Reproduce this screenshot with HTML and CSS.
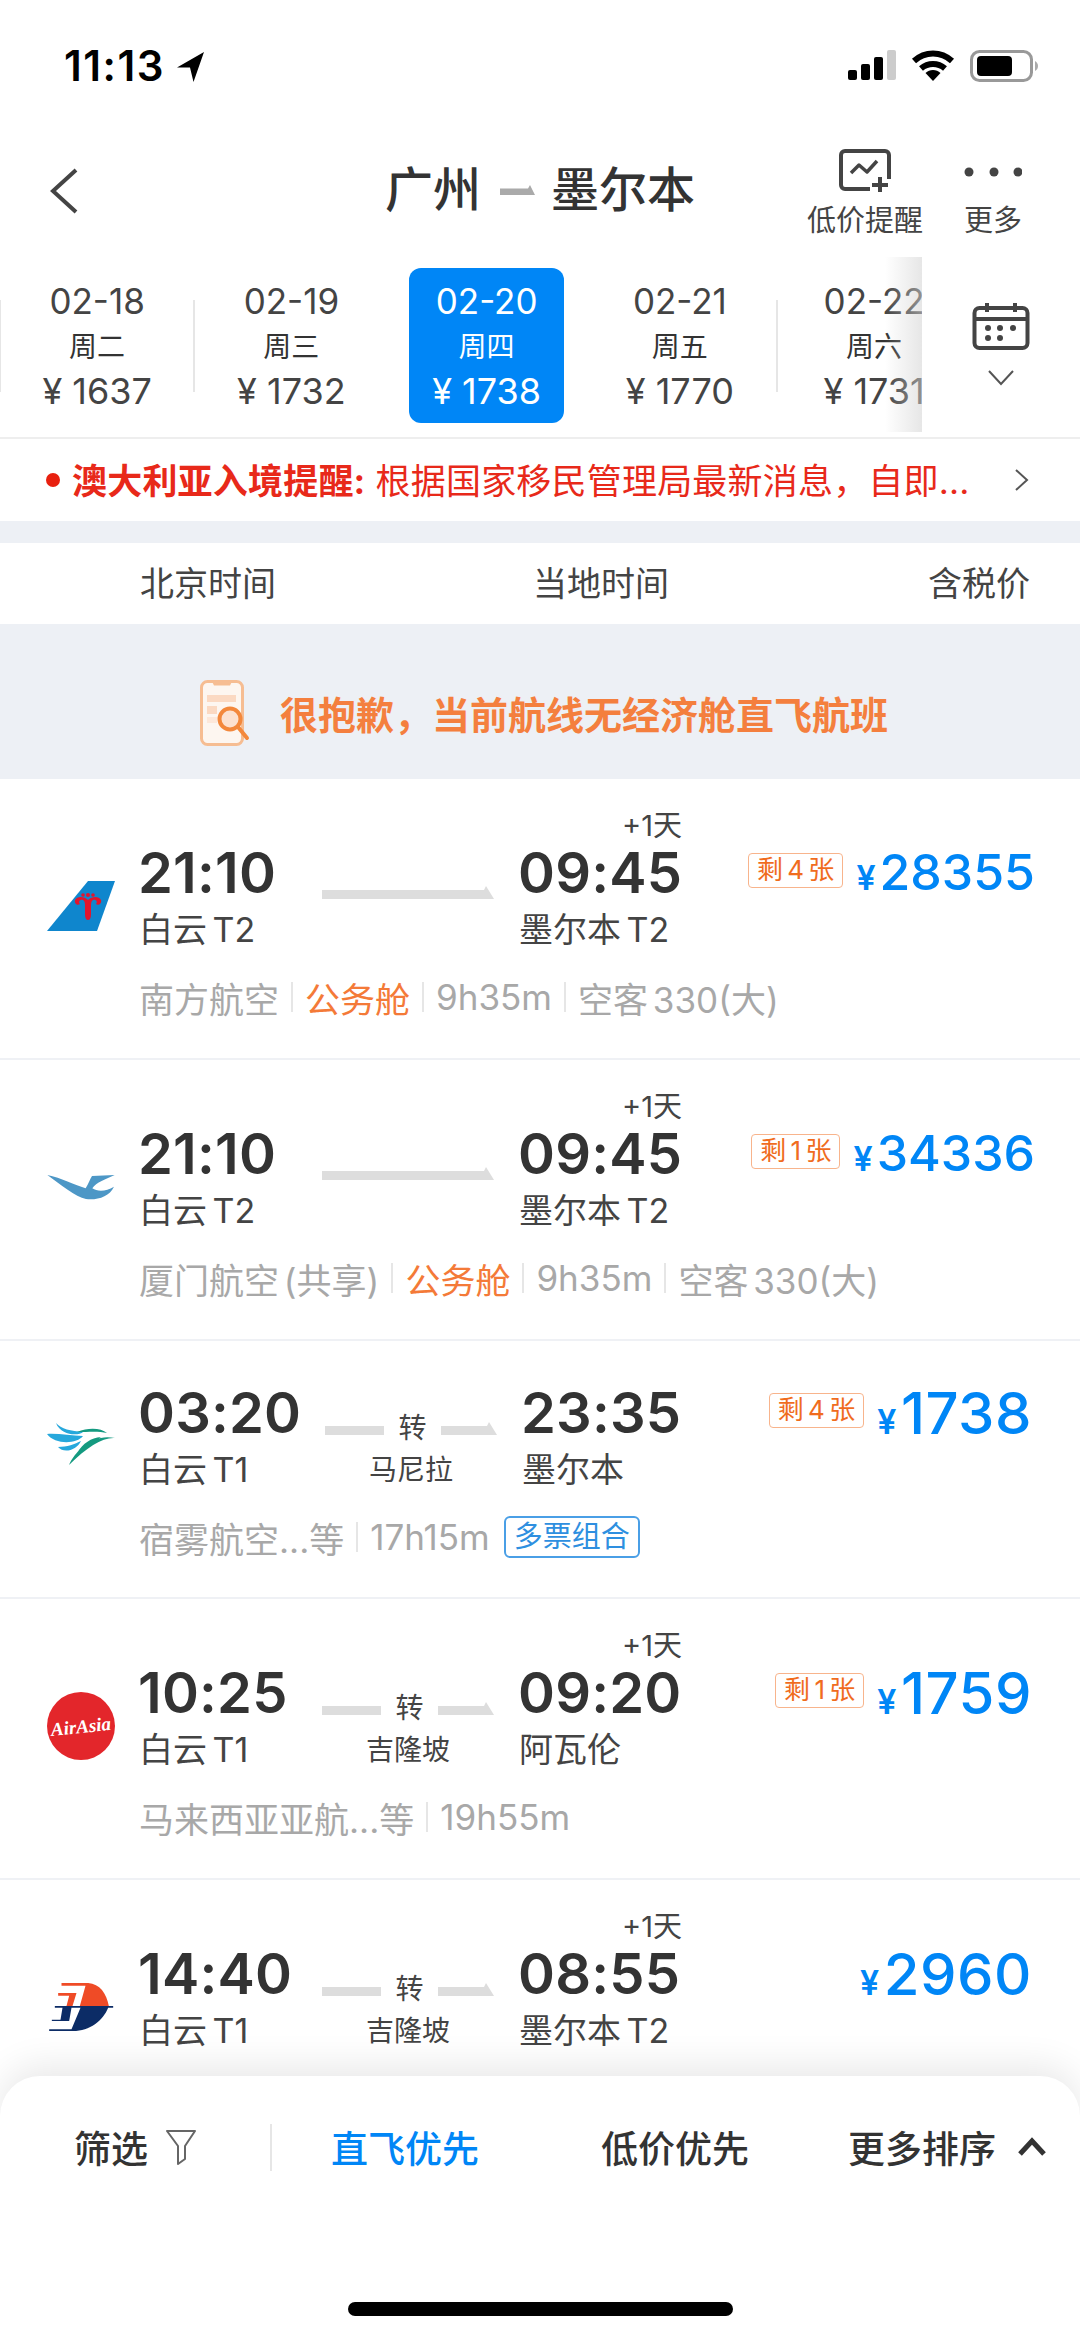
FILE: index.html
```html
<!DOCTYPE html>
<html lang="zh-CN">
<head>
<meta charset="utf-8">
<title>广州 - 墨尔本</title>
<link rel="stylesheet" href="styles.css">
</head>
<body>
<div class="page">
  <header class="status">
    <div class="status-time">11:13
      <svg class="loc" viewBox="0 0 27 30"><path d="M27 0 0 15.500h13L16.500 30Z"/></svg>
    </div>
    <div class="status-icons">
      <svg class="signal" viewBox="0 0 48 30"><rect x="0" y="20" width="9" height="10" rx="2"/><rect x="13" y="14" width="9" height="16" rx="2"/><rect x="26" y="7" width="9" height="23" rx="2"/><rect class="off" x="39" y="0" width="9" height="30" rx="2"/></svg>
      <svg class="wifi" viewBox="0 0 44 31"><path d="M3 11C14 1 30 1 41 11" /><path d="M10 18.500c7-6 17-6 24 0"/><path class="wedge" d="M22 31 14.500 23c4-4 11-4 15 0Z"/></svg>
      <svg class="battery" viewBox="0 0 68 32"><rect class="shell" x="1.500" y="1.500" width="60" height="29" rx="8"/><rect x="7" y="6" width="35" height="20" rx="4"/><path class="nub" d="M65 11c2 1 3 3 3 5s-1 4-3 5Z"/></svg>
    </div>
  </header>

  <nav class="nav">
    <div class="nav-left"><svg class="back" viewBox="0 0 28 46"><path d="M26 2 3 23l23 21"/></svg></div>
    <h1 class="title">广州<svg class="title-link" viewBox="0 0 35 10"><path d="M0 3.500h28L30 0l5 10H0Z"/></svg>墨尔本</h1>
    <div class="nav-actions">
      <div class="action">
        <svg class="action-icon alert" viewBox="0 0 52 44"><path class="frame" d="M31 40H6a4 4 0 0 1-4-4V6a4 4 0 0 1 4-4h40a4 4 0 0 1 4 4v24"/><path class="frame thin" d="m12 24 8-8 8 7 10-11"/><path class="frame" d="M33 36h16M41 28v15"/></svg>
        <span class="action-label">低价提醒</span>
      </div>
      <div class="action">
        <svg class="action-icon dots" viewBox="0 0 58 44"><circle cx="5" cy="23" r="4.500"/><circle cx="30" cy="23" r="4.500"/><circle cx="54" cy="23" r="4.500"/></svg>
        <span class="action-label">更多</span>
      </div>
    </div>
  </nav>

  <section class="strip">
    <div class="dates">
      <div class="tab sep"><b class="t-date">02-18</b><b class="t-week">周二</b><b class="t-price">¥ 1637</b></div>
      <div class="tab sep"><b class="t-date">02-19</b><b class="t-week">周三</b><b class="t-price">¥ 1732</b></div>
      <div class="tab tab-on"><div class="pill"><b class="t-date">02-20</b><b class="t-week">周四</b><b class="t-price">¥ 1738</b></div></div>
      <div class="tab"><b class="t-date">02-21</b><b class="t-week">周五</b><b class="t-price">¥ 1770</b></div>
      <div class="tab sep tab-last"><b class="t-date">02-22</b><b class="t-week">周六</b><b class="t-price">¥ 1731</b></div>
    </div>
    <div class="fade"></div>
    <div class="cal">
      <svg class="cal-icon" viewBox="0 0 58 48"><rect class="cal-line" x="2.500" y="6" width="53" height="40" rx="5"/><path class="cal-line" d="M2.500 17h53M15 1v9M43 1v9"/><g class="cal-dots"><circle cx="16" cy="26" r="3"/><circle cx="28" cy="26" r="3"/><circle cx="41" cy="26" r="3"/><circle cx="16" cy="36" r="3"/><circle cx="28" cy="36" r="3"/></g></svg>
      <svg class="cal-chev" viewBox="0 0 26 16"><path d="m1 1 12 13L25 1"/></svg>
    </div>
  </section>

  <section class="notice">
    <i class="notice-dot"></i>
    <p class="notice-text"><strong>澳大利亚入境提醒:</strong> 根据国家移民管理局最新消息<span class="tc">，</span>自即...</p>
    <svg class="notice-chev" viewBox="0 0 15 22"><path d="m2 1 11 10L2 21"/></svg>
  </section>

  <div class="band"></div>

  <section class="cols">
    <span class="col-a">北京时间</span>
    <span class="col-b">当地时间</span>
    <span class="col-c">含税价</span>
  </section>

  <section class="sorry">
    <svg class="sorry-icon" viewBox="0 0 56 68">
      <rect class="ph" x="1.500" y="1.500" width="41" height="63" rx="6"/>
      <path class="ph-bar" d="M12 1.500h20l-2 4H14Z"/>
      <rect class="blk" x="7" y="15" width="29" height="7"/>
      <rect class="blk" x="7" y="26" width="10" height="8"/>
      <rect class="blk2" x="7" y="37" width="10" height="6"/>
      <circle class="lens-fill" cx="30" cy="39" r="10.500"/>
      <path class="lens" d="m38 47 9 11"/>
    </svg>
    <span class="sorry-text">很抱歉<span class="tc">，</span>当前航线无经济舱直飞航班</span>
  </section>

  <article class="row">
    <div class="logo">
      <svg class="lg-tail" viewBox="0 0 68 50"><path fill="#0f86cd" d="M0 50 41 0h27L50 50Z"/><path fill="#e3142c" d="M41 19C37 15 30 15 28 19 27 23 31 25 33 23 31 21 33 18 36 19 38 20 38 23 38 26V33C38 37 39 39 41 39 43 39 44 37 44 33V26C44 23 44 20 46 19 49 18 51 21 49 23 51 25 55 23 54 19 52 15 45 15 41 19Z"/><circle fill="#e3142c" cx="41" cy="14" r="2"/><circle fill="#e3142c" cx="36" cy="14" r="1.800"/><circle fill="#e3142c" cx="46" cy="14" r="1.800"/></svg>
    </div>
    <div class="plus">+1天</div>
    <div class="dep time">21:10</div>
    <div class="dep-sub sub">白云 T2</div>
    <div class="route"><svg class="line-long" viewBox="0 0 172 13"><path d="M0 4h162l2-4 8 13H0Z"/></svg></div>
    <div class="arr time">09:45</div>
    <div class="arr-sub sub">墨尔本 T2</div>
    <div class="price-box"><span class="left">剩 4 张</span><span class="price price-s"><i>¥</i>28355</span></div>
    <div class="meta"><span>南方航空</span><u></u><span class="cabin">公务舱</span><u></u><span>9h35m</span><u></u><span>空客 330(大)</span></div>
  </article>

  <article class="row">
    <div class="logo">
      <svg class="lg-xm" viewBox="0 0 202 75"><path fill="#4d97c6" d="M0 0C40 8 88 32 115 40 124 25 128 12 134 3L202 0C176 12 146 22 135 40 150 50 176 50 200 35 186 65 150 76 116 72 84 66 40 28 0 0Z"/></svg>
    </div>
    <div class="plus">+1天</div>
    <div class="dep time">21:10</div>
    <div class="dep-sub sub">白云 T2</div>
    <div class="route"><svg class="line-long" viewBox="0 0 172 13"><path d="M0 4h162l2-4 8 13H0Z"/></svg></div>
    <div class="arr time">09:45</div>
    <div class="arr-sub sub">墨尔本 T2</div>
    <div class="price-box"><span class="left">剩 1 张</span><span class="price price-s"><i>¥</i>34336</span></div>
    <div class="meta"><span>厦门航空 (共享)</span><u></u><span class="cabin">公务舱</span><u></u><span>9h35m</span><u></u><span>空客 330(大)</span></div>
  </article>

  <article class="row row-short">
    <div class="logo">
      <svg class="lg-cebu" viewBox="0 0 68 42">
        <path fill="#27a8dc" d="M9 0C14 6 24 8 36 9 32 13 14 13 9 0ZM0 11C10 10 24 13 36 13 30 21 8 22 0 11ZM11 24C20 24 28 21 34 18 30 27 17 31 11 24Z"/>
        <path fill="#149a80" d="M30 9C42 4 54 5 60 10 52 8 42 9 30 9ZM22 42C28 28 46 10 68 15 56 14 40 24 22 42ZM30 30C36 20 44 15 54 14 46 19 38 25 30 30Z"/>
      </svg>
    </div>
    <div class="dep time">03:20</div>
    <div class="dep-sub sub">白云 T1</div>
    <div class="route route-via"><i class="seg"></i><span class="via">转</span><svg class="seg-end" viewBox="0 0 56 13"><path d="M0 4h46l2-4 8 13H0Z"/></svg></div>
    <div class="via-name">马尼拉</div>
    <div class="arr time">23:35</div>
    <div class="arr-sub sub">墨尔本</div>
    <div class="price-box"><span class="left">剩 4 张</span><span class="price"><i>¥</i>1738</span></div>
    <div class="meta"><span>宿雾航空...等</span><u></u><span>17h15m</span><span class="combo">多票组合</span></div>
  </article>

  <article class="row">
    <div class="logo">
      <svg class="lg-aa" viewBox="0 0 68 68"><ellipse fill="#e3262b" cx="34" cy="34" rx="34" ry="34"/><text class="aa-text" x="34" y="41" text-anchor="middle" transform="rotate(-6 34 36)">AirAsia</text></svg>
    </div>
    <div class="plus">+1天</div>
    <div class="dep time">10:25</div>
    <div class="dep-sub sub">白云 T1</div>
    <div class="route route-via"><i class="seg"></i><span class="via">转</span><svg class="seg-end" viewBox="0 0 56 13"><path d="M0 4h46l2-4 8 13H0Z"/></svg></div>
    <div class="via-name">吉隆坡</div>
    <div class="arr time">09:20</div>
    <div class="arr-sub sub">阿瓦伦</div>
    <div class="price-box"><span class="left">剩 1 张</span><span class="price"><i>¥</i>1759</span></div>
    <div class="meta"><span>马来西亚亚航...等</span><u></u><span>19h55m</span></div>
  </article>

  <article class="row">
    <div class="logo">
      <svg class="lg-mh" viewBox="25 25 200 150">
        <path fill="#ef4b26" d="M65 28H145C180 30 200 60 207 97H120L137 36H65ZM55 58H110L98 97H80L88 66H55Z"/>
        <path fill="#0c2c66" d="M45 97H220V102H45ZM122 102H205C190 140 150 172 100 172H28V167H95ZM68 102H95L88 142H36V138H62Z"/>
      </svg>
    </div>
    <div class="plus">+1天</div>
    <div class="dep time">14:40</div>
    <div class="dep-sub sub">白云 T1</div>
    <div class="route route-via"><i class="seg"></i><span class="via">转</span><svg class="seg-end" viewBox="0 0 56 13"><path d="M0 4h46l2-4 8 13H0Z"/></svg></div>
    <div class="via-name">吉隆坡</div>
    <div class="arr time">08:55</div>
    <div class="arr-sub sub">墨尔本 T2</div>
    <div class="price-box"><span class="price"><i>¥</i>2960</span></div>
  </article>

  <footer class="sheet">
    <div class="bar">
      <span class="filter">筛选</span>
      <svg class="funnel" viewBox="0 0 32 36"><path d="M2 2h28L20 17v13l-7 5V17Z"/></svg>
      <i class="bar-div"></i>
      <span class="sort sort-on">直飞优先</span>
      <span class="sort sort-low">低价优先</span>
      <span class="sort sort-more">更多排序</span>
      <svg class="up" viewBox="0 0 30 20"><path d="M3 17 15 4l12 13"/></svg>
    </div>
    <div class="home"></div>
  </footer>
</div>
</body>
</html>
```

FILE: styles.css
```css
* { box-sizing: border-box; }
html, body { margin: 0; padding: 0; background: #fff; }
body { font-family: Inter, "Noto Sans CJK SC", sans-serif; color: #333; }
.page { position: relative; width: 1080px; height: 2339px; overflow: hidden; background: #fff; }
.tc { font-family: "Noto Sans CJK TC", sans-serif; }

/* status bar */
.status { height: 120px; display: flex; justify-content: space-between; padding: 47px 42px 0 64px; }
.status-time { display: flex; align-items: flex-start; gap: 12px; font-size: 42px; font-weight: 600; letter-spacing: 1.500px; line-height: 38px; color: #000; }
.loc { width: 27px; height: 30px; margin-top: 5px; fill: #000; }
.status-icons { display: flex; align-items: flex-start; gap: 15px; padding-top: 3px; }
.signal { width: 48px; height: 30px; fill: #000; }
.signal .off { fill: #ccc; }
.wifi { width: 44px; height: 31px; fill: none; stroke: #000; stroke-width: 6; }
.wifi .wedge { fill: #000; stroke: none; }
.battery { width: 68px; height: 32px; fill: #000; }
.battery .shell { fill: none; stroke: #999; stroke-width: 3; }
.battery .nub { fill: #aaa; }

/* nav */
.nav { height: 148px; display: grid; grid-template-columns: 1fr auto 1fr; }
.nav-left { padding: 48px 0 0 50px; }
.back { width: 28px; height: 46px; fill: none; stroke: #444; stroke-width: 4; display: block; }
.title { margin: 40px 0 0; font-size: 48px; font-weight: 500; line-height: 60px; color: #333; display: flex; align-items: center; height: 60px; }
.title-link { width: 35px; height: 10px; margin: 0 16px 0 19px; fill: #aaa; }
.nav-actions { display: flex; justify-content: flex-end; gap: 41px; padding: 29px 58px 0 0; }
.action { display: flex; flex-direction: column; align-items: center; }
.action-icon { height: 44px; display: block; }
.alert { width: 52px; }
.dots { width: 58px; fill: #444; }
.frame { fill: none; stroke: #444; stroke-width: 4; stroke-linejoin: round; }
.frame.thin { stroke-width: 3.500; }
.action-label { font-size: 29px; line-height: 40px; margin-top: 8px; color: #444; }

/* date strip */
.strip { position: relative; height: 171px; display: flex; border-bottom: 2px solid #eeeeee; }
.dates { width: 922px; height: 169px; display: flex; overflow: hidden; }
.tab { position: relative; flex: 0 0 194.250px; height: 155px; padding-top: 10px; display: flex; flex-direction: column; align-items: center; white-space: nowrap; }
.tab b { font-weight: 400; display: block; }
.t-date { font-size: 35px; line-height: 46px; color: #444; }
.t-week { font-size: 28px; line-height: 46px; color: #333; }
.t-price { font-size: 36px; line-height: 42px; color: #444; }
.tab.sep::before { content: ""; position: absolute; left: -1px; top: 32px; height: 92px; width: 2px; background: #e6e6e6; }
.tab-on { padding-top: 0; }
.pill { width: 155px; height: 155px; margin-left: 2px; padding-top: 10px; border-radius: 12px; background: #0086f6; display: flex; flex-direction: column; align-items: center; }
.pill b { color: #fff; }
.fade { position: absolute; left: 885px; top: -11px; bottom: 5px; width: 37px; background: linear-gradient(90deg, rgba(210,210,210,0), rgba(210,210,210,.55)); }
.cal { flex: 1; display: flex; flex-direction: column; align-items: center; padding-top: 34px; }
.cal-icon { width: 58px; height: 48px; display: block; }
.cal-line { fill: none; stroke: #444; stroke-width: 4; }
.cal-dots { fill: #444; }
.cal-chev { width: 26px; height: 16px; margin-top: 20px; fill: none; stroke: #555; stroke-width: 2; display: block; }

/* notice */
.notice { height: 82px; display: flex; align-items: center; padding-left: 46px; }
.notice-dot { width: 14px; height: 14px; border-radius: 50%; background: #e8200f; flex: none; }
.notice-text { margin: 0 0 0 12px; width: 921px; font-size: 35px; letter-spacing: .200px; line-height: 50px; color: #e8291a; white-space: nowrap; }
.notice-text strong { font-weight: 700; }
.notice-chev { width: 15px; height: 22px; margin-left: 21px; fill: none; stroke: #555; stroke-width: 2; }

.band { height: 22px; background: #edf0f5; }

/* column header */
.cols { height: 81px; display: flex; align-items: center; font-size: 34px; color: #444; padding: 0 50px 5px 140px; }
.col-b { margin-left: 257px; }
.col-c { margin-left: auto; }

/* no-direct banner */
.sorry { height: 155px; padding: 25px 0 0 200px; background: #edf0f5; display: flex; align-items: center; }
.sorry-icon { width: 56px; height: 68px; flex: none; }
.ph { fill: #fdf6f0; stroke: #f6bd92; stroke-width: 3; }
.ph-bar { fill: #f6bd92; }
.blk { fill: #fbd9c2; }
.blk2 { fill: #fde8da; }
.lens { fill: none; stroke: #f3883c; stroke-width: 4; stroke-linecap: round; }
.lens-fill { fill: rgba(251,217,194,.7); stroke: #f3883c; stroke-width: 4; }
.sorry-text { margin-left: 24px; font-size: 38px; font-weight: 700; line-height: 50px; color: #f47f3e; }

/* flight rows */
.row { display: grid; height: 281px; padding: 30px 48px 0 46px; border-bottom: 2px solid #eff1f5;
  grid-template-columns: 94px 182px 198px 162px 1fr;
  grid-template-rows: 34px 60px 54px 78px;
  grid-template-areas:
    ". . . plus ."
    "logo dep route arr price"
    "logo depsub via arrsub ."
    ". meta meta meta meta"; }
.row-short { height: 258px; padding-top: 42px; grid-template-columns: 94px 185px 198px 162px 1fr;
  grid-template-rows: 60px 54px 79px;
  grid-template-areas:
    "logo dep route arr price"
    "logo depsub via arrsub ."
    ". meta meta meta meta"; }
.logo { grid-area: logo; align-self: center; width: 70px; margin-top: 12px; display: flex; justify-content: center; }
.logo svg { display: block; }
.row-short .logo { margin-top: 8px; }
.lg-tail { width: 68px; height: 50px; }
.lg-xm { width: 68px; height: 25px; }
.lg-cebu { width: 68px; height: 42px; }
.lg-aa { width: 68px; height: 68px; }
.lg-mh { width: 67px; height: 50px; }
.aa-text { font-family: "Liberation Serif", serif; font-style: italic; font-weight: 700; font-size: 19px; fill: #fff; }
.plus { grid-area: plus; text-align: right; font-size: 29px; line-height: 30px; padding-top: 2px; color: #444; }
.time { margin-left: -2px; font-size: 56px; font-weight: 600; letter-spacing: .200px; line-height: 60px; color: #333; white-space: nowrap; }
.dep { grid-area: dep; }
.arr { grid-area: arr; }
.sub { margin-left: -1px; font-size: 34px; line-height: 54px; color: #444; white-space: nowrap; word-spacing: -4px; }
.dep-sub { grid-area: depsub; }
.arr-sub { grid-area: arrsub; }
.route { grid-area: route; width: 172px; }
.line-long { width: 172px; height: 13px; display: block; margin-top: 43px; fill: #dddddd; }
.route-via { display: flex; align-items: center; height: 60px; padding-top: 30px; }
.seg { width: 59px; height: 9px; margin-top: 4px; background: #dddddd; }
.via { width: 57px; text-align: center; font-size: 28px; line-height: 36px; color: #444; }
.seg-end { width: 56px; height: 13px; fill: #dddddd; }
.via-name { grid-area: via; width: 172px; text-align: center; font-size: 28px; line-height: 54px; color: #444; }
.price-box { grid-area: price; display: flex; justify-content: flex-end; align-items: center; gap: 13px; padding-bottom: 6px; }
.left { height: 35px; padding: 0 8px; border: 1.500px solid #f8b48c; border-radius: 4px; font-size: 26px; line-height: 31px; color: #f06c1e; white-space: nowrap; word-spacing: -3px; }
.price { display: flex; align-items: baseline; margin-top: 15px; font-size: 58px; font-weight: 500; letter-spacing: .500px; line-height: 60px; color: #0086f6; }
.price-s { margin: 9px -3px 0 0; font-size: 50px; letter-spacing: 0; }
.price i { font-style: normal; font-size: 34px; font-weight: 600; margin-right: 4px; }
.meta { grid-area: meta; margin: 5px 0 0 -1px; display: flex; align-items: center; height: 70px; font-size: 35px; color: #a8a8a8; white-space: nowrap; word-spacing: -5px; }
.meta u { width: 2px; height: 30px; margin: 0 12px; background: #e6e6e6; }
.cabin { color: #f47a38; }
.combo { margin-left: 14px; height: 42px; width: 136px; text-align: center; border: 2px solid #4a9fe6; border-radius: 6px; font-size: 29px; line-height: 37px; color: #2e8fe0; }

/* bottom sheet */
.sheet { position: absolute; left: 0; right: 0; top: 2076px; bottom: 0; background: #fff; border-radius: 40px 40px 0 0; box-shadow: 0 -10px 36px rgba(0,0,0,.09); display: flex; flex-direction: column; }
.bar { display: flex; align-items: center; height: 48px; margin-top: 47px; padding-left: 74px; font-size: 37px; font-weight: 500; color: #333; white-space: nowrap; }
.filter { width: 74px; }
.funnel { width: 32px; height: 36px; margin-left: 17px; fill: none; stroke: #666; stroke-width: 2; stroke-linejoin: round; }
.bar-div { width: 2px; height: 47px; margin-left: 73px; background: #e6e6e6; }
.sort { width: 150px; }
.sort-on { margin-left: 59px; color: #0086f6; }
.sort-low { margin-left: 120px; }
.sort-more { margin-left: 97px; }
.up { width: 30px; height: 20px; margin-left: 19px; fill: none; stroke: #333; stroke-width: 5; }
.home { width: 385px; height: 14px; margin: auto 0 23px 348px; border-radius: 7px; background: #000; }
```
